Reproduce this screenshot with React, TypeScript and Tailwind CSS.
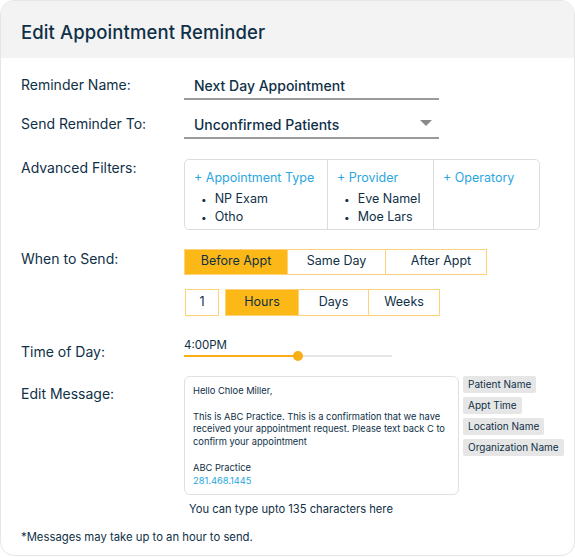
import React from "react";

const navy = "text-[#0f3047]";

const App = () => {
  const filters = [
    { title: "+ Appointment Type", items: ["NP Exam", "Otho"], w: "w-[143px]" },
    { title: "+ Provider", items: ["Eve Namel", "Moe Lars"], w: "w-[106px]" },
    { title: "+ Operatory", items: [], w: "flex-1" },
  ];
  const chips = ["Patient Name", "Appt Time", "Location Name", "Organization Name"];

  return (
    <div className="h-[557px] w-[575px] bg-white font-['Inter',sans-serif]">
      <div className="h-[556px] w-[575px] overflow-hidden rounded-[14px] border border-[#e6e6e6] bg-white">
        {/* Header */}
        <div className="flex h-[57px] items-center bg-[#f3f3f3] px-5 pt-[6px]">
          <h2 className={`text-[18.5px] font-medium tracking-[0.1px] ${navy}`}>
            Edit Appointment Reminder
          </h2>
        </div>

        <div className="pl-5 pt-[15px]">
          {/* Reminder Name */}
          <div className="flex h-[27px] items-center">
            <span className={`w-[163px] pb-[5px] text-[14px] ${navy}`}>Reminder Name:</span>
            <div className="flex h-full w-[255px] items-center border-b-2 border-[#9a9a9a] pl-[10px]">
              <span className={`text-[14px] font-medium ${navy}`}>Next Day Appointment</span>
            </div>
          </div>

          {/* Send Reminder To */}
          <div className="mt-[12px] flex h-[27px] items-center">
            <span className={`w-[163px] pb-[5px] text-[14px] ${navy}`}>Send Reminder To:</span>
            <div className="flex h-full w-[255px] items-center justify-between border-b-2 border-[#9a9a9a] pl-[10px] pr-[7px]">
              <span className={`text-[14px] font-medium ${navy}`}>Unconfirmed Patients</span>
              <svg width="12" height="6" viewBox="0 0 12 6" className="mb-[4px]">
                <path d="M0 0h12L6 6z" fill="#8a8a8a" />
              </svg>
            </div>
          </div>

          {/* Advanced Filters */}
          <div className="mt-[20px] flex">
            <span className={`-mt-[1px] w-[163px] text-[14px] leading-[20px] ${navy}`}>Advanced Filters:</span>
            <div className="flex h-[71px] w-[356px] rounded-[5px] border border-[#dcdcdc]">
              {filters.map((f, i) => (
                <div
                  key={i}
                  className={`${f.w} ${i < 2 ? "border-r border-[#dcdcdc]" : ""} pl-[9px] pt-[10px]`}
                >
                  <div className="text-[12.5px] leading-[16px] text-[#2aa6e0]">{f.title}</div>
                  <ul className="mt-[4px] pl-[7px]">
                    {f.items.map((it) => (
                      <li key={it} className={`flex items-center text-[12.5px] leading-[18px] ${navy}`}>
                        <span className="mr-[8px] text-[10px]">•</span>
                        {it}
                      </li>
                    ))}
                  </ul>
                </div>
              ))}
            </div>
          </div>

          {/* When to Send */}
          <div className="mt-[18px] flex items-center">
            <span className={`w-[163px] pb-[6px] text-[14px] ${navy}`}>When to Send:</span>
            <div className="flex h-[26px] border border-[#fdd27a]">
              <div className={`flex w-[102px] items-center justify-center bg-[#fbb817] text-[12.5px] ${navy}`}>
                Before Appt
              </div>
              <div className={`flex w-[99px] items-center justify-center border-x border-[#fdd27a] text-[12.5px] ${navy}`}>
                Same Day
              </div>
              <div className={`flex w-[100px] items-center justify-center pl-[10px] text-[12.5px] ${navy}`}>
                After Appt
              </div>
            </div>
          </div>

          {/* Units */}
          <div className="mt-[14px] flex pl-[164px]">
            <div className={`flex h-[27px] w-[34px] items-center justify-center border border-[#fdd27a] text-[12.5px] ${navy}`}>
              1
            </div>
            <div className="ml-[6px] flex h-[27px] border border-[#fdd27a]">
              <div className={`flex w-[72px] items-center justify-center bg-[#fbb817] text-[12.5px] ${navy}`}>
                Hours
              </div>
              <div className={`flex w-[71px] items-center justify-center border-x border-[#fdd27a] text-[12.5px] ${navy}`}>
                Days
              </div>
              <div className={`flex w-[70px] items-center justify-center text-[12.5px] ${navy}`}>
                Weeks
              </div>
            </div>
          </div>

          {/* Time of Day */}
          <div className="mt-[22px] flex h-[19px]">
            <span className={`w-[163px] pt-[4px] text-[14px] leading-[20px] ${navy}`}>Time of Day:</span>
            <div className="w-[208px]">
              <div className={`text-[11.5px] leading-[14px] ${navy}`}>4:00PM</div>
              <div className="relative mt-[3px] h-[2px] w-[208px] bg-[#e6e6e6]">
                <div className="h-[2px] w-[114px] bg-[#f9ad16]" />
                <div className="absolute left-[109px] top-[-4px] h-[10px] w-[10px] rounded-full bg-[#f9ad16]" />
              </div>
            </div>
          </div>

          {/* Edit Message */}
          <div className="mt-[19px] flex">
            <span className={`w-[163px] pt-[8px] text-[14px] leading-[20px] ${navy}`}>Edit Message:</span>
            <div>
              <div className={`h-[119px] w-[275px] rounded-[6px] border border-[#e0e0e0] px-[8px] pt-[8px] text-[9.3px] leading-[12.8px] ${navy}`}>
                <p>Hello Chloe Miller,</p>
                <p className="mt-[12.8px]">
                  This is ABC Practice. This is a confirmation that we have received your appointment request. Please text back C to confirm your appointment
                </p>
                <p className="mt-[12.8px]">ABC Practice</p>
                <p className="text-[#2aa6e0]">281.468.1445</p>
              </div>
              <div className={`mt-[6px] pl-[5px] text-[11.2px] leading-[16px] ${navy}`}>
                You can type upto 135 characters here
              </div>
            </div>
            <div className="ml-[4px] flex flex-col items-start gap-[4px]">
              {chips.map((c) => (
                <span
                  key={c}
                  className={`flex h-[17px] items-center rounded-[2px] bg-[#e6e6e6] px-[5px] text-[10px] ${navy}`}
                >
                  {c}
                </span>
              ))}
            </div>
          </div>

          <p className={`mt-[12px] text-[11.3px] leading-[16px] ${navy}`}>*Messages may take up to an hour to send.</p>
        </div>
      </div>
    </div>
  );
};

export default App;
